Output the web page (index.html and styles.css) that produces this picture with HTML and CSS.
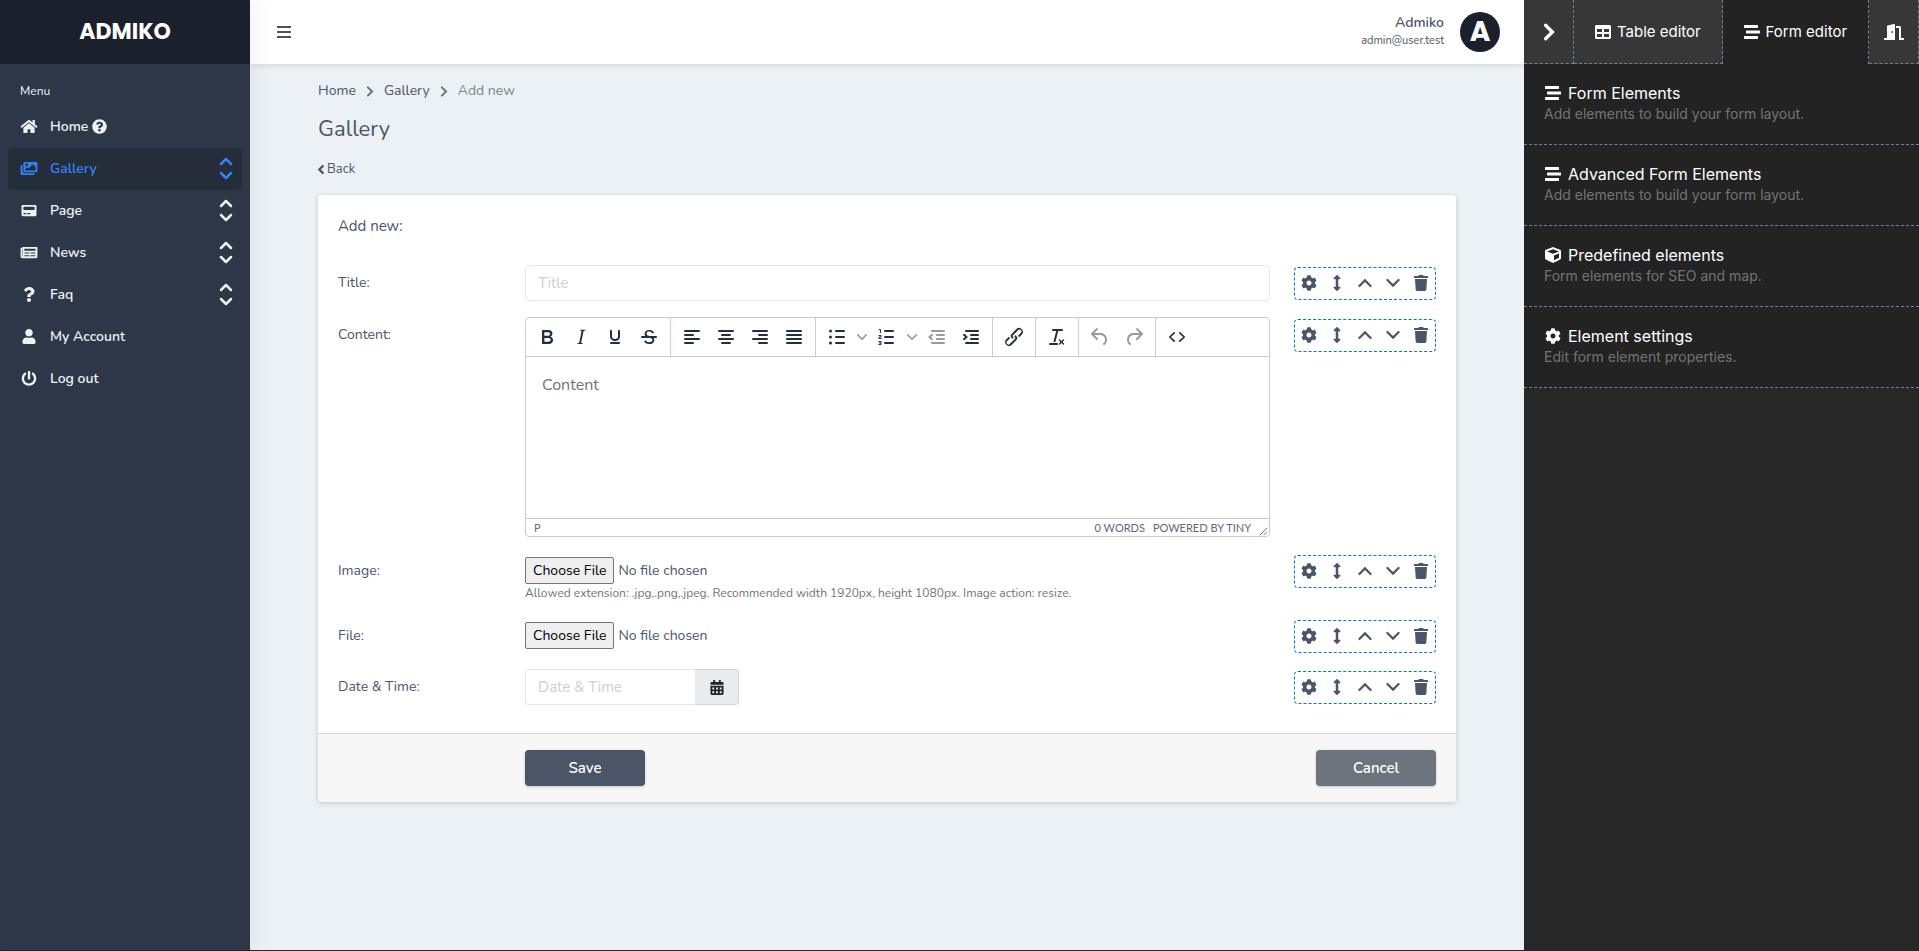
FILE: index.html
```
<!DOCTYPE html>
<html lang="en">
<head>
<meta charset="utf-8">
<title>Admiko - Gallery</title>
<link rel="stylesheet" href="styles.css">
</head>
<body>
<svg class="sprite" aria-hidden="true">
  <symbol id="i-home" viewBox="0 0 576 512"><path d="M280.37 148.26L96 300.11V464a16 16 0 0 0 16 16l112.06-.29a16 16 0 0 0 15.92-16V368a16 16 0 0 1 16-16h64a16 16 0 0 1 16 16v95.64a16 16 0 0 0 16 16.05L464 480a16 16 0 0 0 16-16V300L295.67 148.26a12.19 12.19 0 0 0-15.3 0zM571.6 251.47L488 182.56V44.05a12 12 0 0 0-12-12h-56a12 12 0 0 0-12 12v72.61L318.47 43a48 48 0 0 0-61 0L4.34 251.47a12 12 0 0 0-1.6 16.9l25.5 31A12 12 0 0 0 45.15 301l235.22-193.74a12.19 12.19 0 0 1 15.3 0L530.9 301a12 12 0 0 0 16.9-1.6l25.5-31a12 12 0 0 0-1.7-16.93z"/></symbol>
  <symbol id="i-help" viewBox="0 0 512 512"><path d="M504 256c0 136.997-111.043 248-248 248S8 392.997 8 256C8 119.083 119.043 8 256 8s248 111.083 248 248zM262.655 90c-54.497 0-89.255 22.957-116.549 63.758-3.536 5.286-2.353 12.415 2.715 16.258l34.699 26.31c5.205 3.947 12.621 3.008 16.665-2.122 17.864-22.658 30.113-35.797 57.303-35.797 20.429 0 45.698 13.148 45.698 32.958 0 14.976-12.363 22.667-32.534 33.976C247.128 238.528 216 254.941 216 296v4c0 6.627 5.373 12 12 12h56c6.627 0 12-5.373 12-12v-1.333c0-28.462 83.186-29.647 83.186-106.667 0-58.002-60.165-102-116.531-102zM256 338c-25.365 0-46 20.635-46 46 0 25.364 20.635 46 46 46s46-20.636 46-46c0-25.365-20.635-46-46-46z"/></symbol>
  <symbol id="i-images" viewBox="0 0 576 512"><path d="M480 416v16c0 26.51-21.49 48-48 48H48c-26.51 0-48-21.49-48-48V176c0-26.51 21.49-48 48-48h16v208c0 44.112 35.888 80 80 80h336zm96-80V80c0-26.51-21.49-48-48-48H144c-26.51 0-48 21.49-48 48v256c0 26.51 21.49 48 48 48h384c26.51 0 48-21.49 48-48zM256 128c0 26.51-21.49 48-48 48s-48-21.49-48-48 21.49-48 48-48 48 21.49 48 48zm-96 144l55.515-55.515c4.686-4.686 12.284-4.686 16.971 0L272 256l135.515-135.515c4.686-4.686 12.284-4.686 16.971 0L512 208v112H160v-48z"/></symbol>
  <symbol id="i-page" viewBox="0 0 512 512"><path fill-rule="evenodd" d="M48 64h416a48 48 0 0 1 48 48v288a48 48 0 0 1-48 48H48a48 48 0 0 1-48-48V112a48 48 0 0 1 48-48zM80 128a16 16 0 0 0-16 16v80a16 16 0 0 0 16 16h352a16 16 0 0 0 16-16v-80a16 16 0 0 0-16-16zM76 344a12 12 0 0 0-12 12v16a12 12 0 0 0 12 12h72a12 12 0 0 0 12-12v-16a12 12 0 0 0-12-12zM204 344a12 12 0 0 0-12 12v16a12 12 0 0 0 12 12h84a12 12 0 0 0 12-12v-16a12 12 0 0 0-12-12z"/></symbol>
  <symbol id="i-news" viewBox="0 0 576 512"><path fill-rule="evenodd" d="M552 64H88a24 24 0 0 0-24 24v8H24a24 24 0 0 0-24 24v272a56 56 0 0 0 56 56h472a48 48 0 0 0 48-48V88a24 24 0 0 0-24-24zM56 400a8 8 0 0 1-8-8V144h16v248a8 8 0 0 1-8 8zM140 352h152a12 12 0 0 1 12 12v8a12 12 0 0 1-12 12H140a12 12 0 0 1-12-12v-8a12 12 0 0 1 12-12zM348 352h152a12 12 0 0 1 12 12v8a12 12 0 0 1-12 12H348a12 12 0 0 1-12-12v-8a12 12 0 0 1 12-12zM140 256h152a12 12 0 0 1 12 12v8a12 12 0 0 1-12 12H140a12 12 0 0 1-12-12v-8a12 12 0 0 1 12-12zM348 256h152a12 12 0 0 1 12 12v8a12 12 0 0 1-12 12H348a12 12 0 0 1-12-12v-8a12 12 0 0 1 12-12zM140 128h360a12 12 0 0 1 12 12v40a12 12 0 0 1-12 12H140a12 12 0 0 1-12-12v-40a12 12 0 0 1 12-12z"/></symbol>
  <symbol id="i-question" viewBox="0 0 384 512"><path d="M202.021 0C122.202 0 70.503 32.703 29.914 91.026c-7.363 10.58-5.093 25.086 5.178 32.874l43.138 32.709c10.373 7.865 25.132 6.026 33.253-4.148 25.049-31.381 43.63-49.449 82.757-49.449 30.764 0 68.816 19.799 68.816 49.631 0 22.552-18.617 34.134-48.993 51.164-35.423 19.86-82.299 44.576-82.299 106.405V320c0 13.255 10.745 24 24 24h72.471c13.255 0 24-10.745 24-24v-5.773c0-42.86 125.268-44.645 125.268-160.627C377.504 66.256 286.902 0 202.021 0zM192 373.459c-38.196 0-69.271 31.075-69.271 69.271 0 38.195 31.075 69.27 69.271 69.27s69.271-31.075 69.271-69.271-31.075-69.27-69.271-69.27z"/></symbol>
  <symbol id="i-user" viewBox="0 0 448 512"><path d="M224 256c70.7 0 128-57.3 128-128S294.7 0 224 0 96 57.3 96 128s57.3 128 128 128zm89.6 32h-16.7c-22.2 10.2-46.9 16-72.9 16s-50.6-5.8-72.9-16h-16.7C60.2 288 0 348.2 0 422.4V464c0 26.5 21.5 48 48 48h352c26.5 0 48-21.5 48-48v-41.6c0-74.2-60.2-134.4-134.4-134.4z"/></symbol>
  <symbol id="i-power" viewBox="0 0 512 512"><path d="M400 54.1c63 45 104 118.6 104 201.9 0 136.8-110.8 247.7-247.5 248C120 504.3 8.2 393 8 256.4 7.9 173.1 48.9 99.3 111.8 54.2c11.7-8.3 28-4.8 35 7.7L162.6 90c5.9 10.5 3.1 23.8-6.6 31-41.5 30.8-68 79.6-68 134.9-.1 92.3 74.5 168.1 168 168.1 91.6 0 168.6-74.2 168-169.1-.3-51.8-24.7-101.8-68.1-134-9.7-7.2-12.4-20.5-6.5-30.9l15.8-28.1c7-12.4 23.2-16.1 34.8-7.8zM296 264V24c0-13.3-10.7-24-24-24h-32c-13.3 0-24 10.7-24 24v240c0 13.3 10.7 24 24 24h32c13.3 0 24-10.7 24-24z"/></symbol>
  <symbol id="i-sort" viewBox="0 0 14 24"><path fill="none" stroke="currentColor" stroke-width="2.500" stroke-linecap="round" stroke-linejoin="round" d="M2 7l5-5 5 5M2 16l5 5 5-5"/></symbol>
  <symbol id="i-bars" viewBox="0 0 14 14"><path d="M0 1h14v2H0zM0 6h14v2H0zM0 11h14v2H0z"/></symbol>
  <symbol id="i-right" viewBox="0 0 10 16"><path fill="none" stroke="currentColor" stroke-width="3" stroke-linecap="round" d="M2 2l6 6-6 6"/></symbol>
  <symbol id="i-left" viewBox="0 0 10 16"><path fill="none" stroke="currentColor" stroke-width="4" stroke-linecap="round" d="M8 2L2 8l6 6"/></symbol>
  <symbol id="i-cog" viewBox="0 0 512 512"><path d="M487.4 315.7l-42.6-24.6c4.3-23.2 4.3-47 0-70.2l42.6-24.6c4.9-2.8 7.1-8.6 5.5-14-11.1-35.6-30-67.8-54.7-94.6-3.8-4.1-10-5.1-14.8-2.3L380.8 110c-17.9-15.4-38.5-27.3-60.8-35.1V25.8c0-5.6-3.9-10.5-9.4-11.7-36.7-8.2-74.3-7.8-109.2 0-5.5 1.2-9.4 6.1-9.4 11.7V75c-22.2 7.9-42.8 19.8-60.8 35.1L88.7 85.5c-4.9-2.8-11-1.9-14.8 2.3-24.7 26.7-43.6 58.9-54.7 94.6-1.7 5.4.6 11.2 5.5 14L67.3 221c-4.3 23.2-4.3 47 0 70.2l-42.6 24.6c-4.9 2.8-7.1 8.6-5.5 14 11.1 35.6 30 67.8 54.7 94.6 3.8 4.1 10 5.1 14.8 2.3l42.6-24.6c17.9 15.4 38.5 27.3 60.8 35.1v49.2c0 5.6 3.9 10.5 9.4 11.7 36.7 8.2 74.3 7.8 109.2 0 5.5-1.2 9.4-6.1 9.4-11.7v-49.2c22.2-7.9 42.8-19.8 60.8-35.1l42.6 24.6c4.9 2.8 11 1.9 14.8-2.3 24.7-26.7 43.6-58.9 54.7-94.6 1.5-5.5-.7-11.3-5.6-14.1zM256 336c-44.1 0-80-35.9-80-80s35.9-80 80-80 80 35.9 80 80-35.9 80-80 80z"/></symbol>
  <symbol id="i-move" viewBox="0 0 256 512"><path d="M214.059 377.941H168V134.059h46.059c21.382 0 32.09-25.851 16.971-40.971L144.971 7.029c-9.373-9.373-24.568-9.373-33.941 0L24.971 93.088c-15.119 15.119-4.411 40.971 16.971 40.971H88v243.882H41.941c-21.382 0-32.09 25.851-16.971 40.971l86.059 86.059c9.373 9.373 24.568 9.373 33.941 0l86.059-86.059c15.12-15.119 4.412-40.971-16.97-40.971z"/></symbol>
  <symbol id="i-up" viewBox="0 0 16 16"><path fill="none" stroke="currentColor" stroke-width="2.2" stroke-linecap="round" d="M2.4 11L8 5.4l5.6 5.6"/></symbol>
  <symbol id="i-down" viewBox="0 0 16 16"><path fill="none" stroke="currentColor" stroke-width="2.2" stroke-linecap="round" d="M2.4 5L8 10.600l5.600-5.600"/></symbol>
  <symbol id="i-trash" viewBox="0 0 448 512"><path d="M432 32H312l-9.4-18.7A24 24 0 0 0 281.1 0H166.8a23.72 23.72 0 0 0-21.4 13.3L136 32H16A16 16 0 0 0 0 48v32a16 16 0 0 0 16 16h416a16 16 0 0 0 16-16V48a16 16 0 0 0-16-16zM53.2 467a48 48 0 0 0 47.900 45h245.800a48 48 0 0 0 47.900-45L416 128H32z"/></symbol>
  <symbol id="i-cube" viewBox="0 0 512 512"><path d="M239.1 6.3l-208 78c-18.7 7-31.1 25-31.1 45v225.1c0 18.2 10.3 34.8 26.5 42.9l208 104c13.5 6.8 29.4 6.8 42.9 0l208-104c16.3-8.1 26.5-24.8 26.5-42.9V129.3c0-20-12.4-37.9-31.1-44.9l-208-78C262 2.2 250 2.2 239.1 6.3zM256 68.4l192 72v1.1l-192 78-192-78v-1.1l192-72zm32 356V275.5l160-65v133.9l-160 80z"/></symbol>
  <symbol id="i-door" viewBox="0 0 640 512"><path d="M624 448h-80V113.45C544 86.19 522.47 64 496 64H384v64h96v384h144c8.84 0 16-7.16 16-16v-32c0-8.84-7.16-16-16-16zM312.24 1.01l-192 49.74C105.99 54.44 96 67.7 96 82.92V448H16c-8.84 0-16 7.16-16 16v32c0 8.84 7.16 16 16 16h336V33.18c0-21.58-19.56-37.41-39.76-32.17zM264 288c-13.25 0-24-14.33-24-32s10.75-32 24-32 24 14.33 24 32-10.75 32-24 32z"/></symbol>
  <symbol id="i-stream" viewBox="0 0 512 512"><path d="M16 128h416c8.84 0 16-7.16 16-16V48c0-8.84-7.16-16-16-16H16C7.16 32 0 39.16 0 48v64c0 8.84 7.16 16 16 16zm480 80H80c-8.84 0-16 7.16-16 16v64c0 8.84 7.16 16 16 16h416c8.84 0 16-7.16 16-16v-64c0-8.84-7.16-16-16-16zm-64 176H16c-8.84 0-16 7.16-16 16v64c0 8.84 7.16 16 16 16h416c8.84 0 16-7.16 16-16v-64c0-8.84-7.16-16-16-16z"/></symbol>
  <symbol id="i-table" viewBox="0 0 512 512"><path d="M464 32H48C21.49 32 0 53.49 0 80v352c0 26.51 21.49 48 48 48h416c26.51 0 48-21.49 48-48V80c0-26.51-21.49-48-48-48zM224 416H64v-96h160v96zm0-160H64v-96h160v96zm224 160H288v-96h160v96zm0-160H288v-96h160v96z"/></symbol>
  <symbol id="i-calendar" viewBox="0 0 448 512"><path fill-rule="evenodd" d="M0 192h448v272a48 48 0 0 1-48 48H48a48 48 0 0 1-48-48zM64 256v64h64v-64zM192 256v64h64v-64zM320 256v64h64v-64zM64 384v64h64v-64zM192 384v64h64v-64zM320 384v64h64v-64zM448 112v48H0v-48a48 48 0 0 1 48-48h48V12a12 12 0 0 1 12-12h40a12 12 0 0 1 12 12v52h128V12a12 12 0 0 1 12-12h40a12 12 0 0 1 12 12v52h48a48 48 0 0 1 48 48z"/></symbol>
  <symbol id="t-bold" viewBox="0 0 24 24"><path fill-rule="evenodd" d="M7.8 19c-.3 0-.5 0-.6-.2l-.2-.5V5.7c0-.2 0-.4.2-.5l.6-.2h5c1.500 0 2.700.3 3.500 1 .7.6 1.100 1.400 1.100 2.500a3 3 0 0 1-.6 1.900c-.4.6-1 1-1.600 1.200.4.1.9.3 1.300.6s.8.7 1 1.200c.4.4.5 1 .5 1.600 0 1.300-.4 2.300-1.300 3-.8.7-2.100 1-3.800 1H7.800zm5-8.300c.6 0 1.200-.1 1.600-.5.4-.3.6-.7.6-1.300 0-1.100-.8-1.700-2.300-1.700H9.300v3.500h3.400zm.5 6c.7 0 1.300-.1 1.700-.4.4-.4.6-.9.6-1.500s-.2-1-.7-1.400c-.4-.3-1-.4-2-.4H9.400v3.800h4z"/></symbol>
  <symbol id="t-italic" viewBox="0 0 24 24"><path d="M16.700 4.700l-.1.9h-.3c-.6 0-1 0-1.400.3-.3.3-.4.6-.5 1.100l-2.100 9.800v.6c0 .5.4.8 1.400.8h.2l-.2.8H8l.2-.8h.2c1.100 0 1.800-.5 2-1.500l2-9.800.1-.5c0-.6-.4-.8-1.400-.8h-.3l.2-.9h5.800z"/></symbol>
  <symbol id="t-under" viewBox="0 0 24 24"><path d="M16 5c.6 0 1 .4 1 1v5.500a4 4 0 0 1-.4 1.800l-1 1.400a5.300 5.300 0 0 1-5.500 1 5 5 0 0 1-1.600-1c-.5-.4-.8-.9-1.100-1.400a4 4 0 0 1-.4-1.800V6c0-.6.4-1 1-1s1 .4 1 1v5.500c0 .3 0 .6.2 1l.6.7a3.300 3.300 0 0 0 2.200.8 3.400 3.400 0 0 0 2.200-.8c.3-.2.4-.5.6-.8l.2-.9V6c0-.6.4-1 1-1zM8 17h8c.6 0 1 .4 1 1s-.4 1-1 1H8a1 1 0 0 1 0-2z"/></symbol>
  <symbol id="t-strike" viewBox="0 0 24 24"><path d="M15.600 8.500c-.5-.7-1-1.100-1.300-1.300-.6-.4-1.300-.6-2-.6-2.700 0-2.800 1.700-2.800 2.100 0 1.600 1.800 2 3.200 2.300 4.400.9 4.600 2.800 4.600 3.900 0 1.400-.7 4.100-5 4.100A6.200 6.200 0 0 1 7 16.400l1.500-1.100c.4.6 1.600 2 3.700 2 1.600 0 2.500-.4 3-1.200.4-.8.3-2-.8-2.600-.7-.4-1.600-.7-2.900-1-1-.2-3.900-.8-3.900-3.600C7.600 6 10.300 5 12.400 5c2.900 0 4.200 1.600 4.700 2.400l-1.500 1.100z"/><path d="M5 11h14a1 1 0 0 1 0 2H5a1 1 0 0 1 0-2z"/></symbol>
  <symbol id="t-left" viewBox="0 0 24 24"><path class="ln" d="M5 6h14M5 10h8M5 14h14M5 18h8"/></symbol>
  <symbol id="t-center" viewBox="0 0 24 24"><path class="ln" d="M5 6h14M8 10h8M5 14h14M8 18h8"/></symbol>
  <symbol id="t-right" viewBox="0 0 24 24"><path class="ln" d="M5 6h14M11 10h8M5 14h14M11 18h8"/></symbol>
  <symbol id="t-justify" viewBox="0 0 24 24"><path class="ln" d="M5 6h14M5 10h14M5 14h14M5 18h14"/></symbol>
  <symbol id="t-ul" viewBox="0 0 24 24"><path class="ln" d="M11 6h8M11 12h8M11 18h8"/><circle cx="5.500" cy="6" r="1.500"/><circle cx="5.500" cy="12" r="1.500"/><circle cx="5.500" cy="18" r="1.500"/></symbol>
  <symbol id="t-ol" viewBox="0 0 24 24"><path class="ln" d="M10 6h8M10 12h8M10 18h8"/><path fill="none" stroke="currentColor" d="M4 4.500h1.500V8M3.500 10.500H6V12H4v1.500h2.500M3.500 16.500H6v3H3.500M4 18h2"/></symbol>
  <symbol id="t-chev" viewBox="0 0 10 10"><path d="M8.700 2.200c.3-.3.8-.3 1 0 .4.4.4.9 0 1.200L5.700 7.800c-.3.3-.9.3-1.200 0L.2 3.400a.8.8 0 0 1 0-1.200c.3-.3.8-.3 1.100 0L5 6l3.700-3.800z"/></symbol>
  <symbol id="t-outdent" viewBox="0 0 24 24"><path class="ln" d="M7 6h12M12 10h7M12 14h7M7 18h12M7 9.800L4.400 12 7 14.200"/></symbol>
  <symbol id="t-indent" viewBox="0 0 24 24"><path class="ln" d="M7 6h12M12 10h7M12 14h7M7 18h12M5 9.800L7.600 12 5 14.200"/></symbol>
  <symbol id="t-link" viewBox="0 0 24 24"><path d="M6.200 12.300a1 1 0 0 1 1.400 1.400l-2.100 2a2 2 0 1 0 2.700 2.800l4.800-4.800a1 1 0 0 0 0-1.400 1 1 0 1 1 1.400-1.300 2.900 2.900 0 0 1 0 4L9.600 20a3.900 3.900 0 0 1-5.500-5.500l2-2zm11.600-.6a1 1 0 0 1-1.400-1.400l2-2a2 2 0 1 0-2.600-2.800L11 10.300a1 1 0 0 0 0 1.400A1 1 0 1 1 9.600 13a2.900 2.900 0 0 1 0-4L14.400 4a3.900 3.900 0 0 1 5.500 5.500l-2 2z"/></symbol>
  <symbol id="t-clear" viewBox="0 0 24 24"><path d="M13.200 6a1 1 0 0 1 0 .2l-2.600 10a1 1 0 0 1-1 .8h-.2a.8.8 0 0 1-.8-1l2.600-10H8a1 1 0 1 1 0-2h9a1 1 0 0 1 0 2h-3.800zM5 18h7a1 1 0 0 1 0 2H5a1 1 0 0 1 0-2zm13 1.500L16.500 18 15 19.500a.7.7 0 0 1-1-1l1.500-1.500-1.500-1.500a.7.7 0 0 1 1-1l1.500 1.500 1.500-1.500a.7.7 0 0 1 1 1L17.500 17l1.500 1.500a.7.7 0 0 1-1 1z"/></symbol>
  <symbol id="t-undo" viewBox="0 0 24 24"><path d="M6.400 8H12c3.700 0 6.200 2 6.800 5.100.6 2.700-.4 5.600-2.300 6.800a1 1 0 0 1-1-1.800c1.100-.6 1.800-2.700 1.400-4.600-.5-2.100-2.100-3.500-4.900-3.500H6.400l3.300 3.300a1 1 0 1 1-1.400 1.400l-5-5a1 1 0 0 1 0-1.400l5-5a1 1 0 0 1 1.400 1.400L6.400 8z"/></symbol>
  <symbol id="t-redo" viewBox="0 0 24 24"><path transform="matrix(-1 0 0 1 24 0)" d="M6.400 8H12c3.700 0 6.200 2 6.800 5.100.6 2.700-.4 5.600-2.300 6.800a1 1 0 0 1-1-1.800c1.100-.6 1.800-2.700 1.400-4.600-.5-2.100-2.100-3.500-4.900-3.500H6.400l3.300 3.300a1 1 0 1 1-1.400 1.400l-5-5a1 1 0 0 1 0-1.400l5-5a1 1 0 0 1 1.400 1.400L6.400 8z"/></symbol>
  <symbol id="t-code" viewBox="0 0 24 24"><path fill="none" stroke="currentColor" stroke-width="1.700" stroke-linecap="round" stroke-linejoin="round" d="M9.200 7.800L4.800 12l4.400 4.200M14.800 7.800l4.400 4.200-4.400 4.200"/></symbol>
</svg>

<div class="app">
  <aside class="sidebar">
    <a class="brand" href="#">ADMIKO</a>
    <nav class="menu" aria-label="Main">
      <p class="menu-title">Menu</p>
      <a class="item" href="#"><svg class="mi"><use href="#i-home"/></svg><span>Home</span><svg class="help"><use href="#i-help"/></svg></a>
      <a class="item active" href="#"><svg class="mi"><use href="#i-images"/></svg><span>Gallery</span><svg class="sort"><use href="#i-sort"/></svg></a>
      <a class="item" href="#"><svg class="mi"><use href="#i-page"/></svg><span>Page</span><svg class="sort"><use href="#i-sort"/></svg></a>
      <a class="item" href="#"><svg class="mi"><use href="#i-news"/></svg><span>News</span><svg class="sort"><use href="#i-sort"/></svg></a>
      <a class="item" href="#"><svg class="mi"><use href="#i-question"/></svg><span>Faq</span><svg class="sort"><use href="#i-sort"/></svg></a>
      <a class="item" href="#"><svg class="mi"><use href="#i-user"/></svg><span>My Account</span></a>
      <a class="item" href="#"><svg class="mi"><use href="#i-power"/></svg><span>Log out</span></a>
    </nav>
  </aside>

  <div class="main">
    <header class="topbar">
      <button class="burger" type="button" aria-label="Toggle menu"><svg><use href="#i-bars"/></svg></button>
      <div class="user">
        <div class="user-text"><strong>Admiko</strong><span>admin@user.test</span></div>
        <span class="avatar">A</span>
      </div>
    </header>

    <main class="content">
      <nav class="crumbs" aria-label="Breadcrumb">
        <a href="#">Home</a><svg><use href="#i-right"/></svg><a href="#">Gallery</a><svg><use href="#i-right"/></svg><span>Add new</span>
      </nav>
      <h1>Gallery</h1>
      <a class="back" href="#"><svg><use href="#i-left"/></svg>Back</a>

      <form class="card">
        <div class="card-body">
          <h2>Add new:</h2>
          <div class="row">
            <label for="title">Title:</label>
            <input class="text" id="title" type="text" placeholder="Title">
            <div class="tools">
              <button type="button" aria-label="Settings"><svg><use href="#i-cog"/></svg></button><button type="button" aria-label="Move"><svg><use href="#i-move"/></svg></button><button type="button" aria-label="Up"><svg><use href="#i-up"/></svg></button><button type="button" aria-label="Down"><svg><use href="#i-down"/></svg></button><button type="button" aria-label="Delete"><svg><use href="#i-trash"/></svg></button>
            </div>
          </div>
          <div class="row">
            <label for="body">Content:</label>
            <div class="editor">
              <div class="toolbar">
                <div class="group">
                  <button type="button" aria-label="Bold"><svg><use href="#t-bold"/></svg></button><button type="button" aria-label="Italic"><svg><use href="#t-italic"/></svg></button><button type="button" aria-label="Underline"><svg><use href="#t-under"/></svg></button><button type="button" aria-label="Strikethrough"><svg><use href="#t-strike"/></svg></button>
                </div>
                <div class="group">
                  <button type="button" aria-label="Align left"><svg><use href="#t-left"/></svg></button><button type="button" aria-label="Align center"><svg><use href="#t-center"/></svg></button><button type="button" aria-label="Align right"><svg><use href="#t-right"/></svg></button><button type="button" aria-label="Justify"><svg><use href="#t-justify"/></svg></button>
                </div>
                <div class="group">
                  <button type="button" aria-label="Bullet list"><svg><use href="#t-ul"/></svg></button><button class="chev" type="button" aria-label="Bullet styles"><svg><use href="#t-chev"/></svg></button><button type="button" aria-label="Numbered list"><svg><use href="#t-ol"/></svg></button><button class="chev" type="button" aria-label="Number styles"><svg><use href="#t-chev"/></svg></button><button class="off" type="button" aria-label="Decrease indent"><svg><use href="#t-outdent"/></svg></button><button type="button" aria-label="Increase indent"><svg><use href="#t-indent"/></svg></button>
                </div>
                <div class="group">
                  <button type="button" aria-label="Link"><svg><use href="#t-link"/></svg></button>
                </div>
                <div class="group">
                  <button type="button" aria-label="Clear formatting"><svg><use href="#t-clear"/></svg></button>
                </div>
                <div class="group">
                  <button class="off" type="button" aria-label="Undo"><svg><use href="#t-undo"/></svg></button><button class="off" type="button" aria-label="Redo"><svg><use href="#t-redo"/></svg></button>
                </div>
                <div class="group">
                  <button type="button" aria-label="Source code"><svg><use href="#t-code"/></svg></button>
                </div>
              </div>
              <textarea id="body" placeholder="Content"></textarea>
              <div class="status">
                <span class="path">P</span><span>0 WORDS</span><a href="#">POWERED BY TINY</a>
                <svg class="grip" viewBox="0 0 10 10"><path d="M1 9l8-8M5 9l4-4"/></svg>
              </div>
            </div>
            <div class="tools">
              <button type="button" aria-label="Settings"><svg><use href="#i-cog"/></svg></button><button type="button" aria-label="Move"><svg><use href="#i-move"/></svg></button><button type="button" aria-label="Up"><svg><use href="#i-up"/></svg></button><button type="button" aria-label="Down"><svg><use href="#i-down"/></svg></button><button type="button" aria-label="Delete"><svg><use href="#i-trash"/></svg></button>
            </div>
          </div>
          <div class="row">
            <label for="image">Image:</label>
            <div class="file">
              <input id="image" type="file">
              <small>Allowed extension: .jpg,.png,.jpeg. Recommended width 1920px, height 1080px. Image action: resize.</small>
            </div>
            <div class="tools">
              <button type="button" aria-label="Settings"><svg><use href="#i-cog"/></svg></button><button type="button" aria-label="Move"><svg><use href="#i-move"/></svg></button><button type="button" aria-label="Up"><svg><use href="#i-up"/></svg></button><button type="button" aria-label="Down"><svg><use href="#i-down"/></svg></button><button type="button" aria-label="Delete"><svg><use href="#i-trash"/></svg></button>
            </div>
          </div>
          <div class="row">
            <label for="file">File:</label>
            <div class="file"><input id="file" type="file"></div>
            <div class="tools">
              <button type="button" aria-label="Settings"><svg><use href="#i-cog"/></svg></button><button type="button" aria-label="Move"><svg><use href="#i-move"/></svg></button><button type="button" aria-label="Up"><svg><use href="#i-up"/></svg></button><button type="button" aria-label="Down"><svg><use href="#i-down"/></svg></button><button type="button" aria-label="Delete"><svg><use href="#i-trash"/></svg></button>
            </div>
          </div>
          <div class="row">
            <label for="date">Date &amp; Time:</label>
            <div class="date">
              <input class="text" id="date" type="text" placeholder="Date &amp; Time">
              <button type="button" aria-label="Open calendar"><svg><use href="#i-calendar"/></svg></button>
            </div>
            <div class="tools">
              <button type="button" aria-label="Settings"><svg><use href="#i-cog"/></svg></button><button type="button" aria-label="Move"><svg><use href="#i-move"/></svg></button><button type="button" aria-label="Up"><svg><use href="#i-up"/></svg></button><button type="button" aria-label="Down"><svg><use href="#i-down"/></svg></button><button type="button" aria-label="Delete"><svg><use href="#i-trash"/></svg></button>
            </div>
          </div>
        </div>
        <div class="card-foot">
          <button class="btn save" type="submit">Save</button>
          <button class="btn cancel" type="button">Cancel</button>
        </div>
      </form>
    </main>
  </div>

  <aside class="builder">
    <div class="tabs">
      <button class="tab close" type="button" aria-label="Collapse"><svg><use href="#i-right"/></svg></button>
      <button class="tab" type="button"><svg><use href="#i-table"/></svg>Table editor</button>
      <button class="tab on" type="button"><svg><use href="#i-stream"/></svg>Form editor</button>
      <button class="tab exit" type="button" aria-label="Exit"><svg><use href="#i-door"/></svg></button>
    </div>
    <a class="panel" href="#"><span class="panel-title"><svg><use href="#i-stream"/></svg>Form Elements</span><span class="panel-text">Add elements to build your form layout.</span></a>
    <a class="panel" href="#"><span class="panel-title"><svg><use href="#i-stream"/></svg>Advanced Form Elements</span><span class="panel-text">Add elements to build your form layout.</span></a>
    <a class="panel" href="#"><span class="panel-title"><svg><use href="#i-cube"/></svg>Predefined elements</span><span class="panel-text">Form elements for SEO and map.</span></a>
    <a class="panel" href="#"><span class="panel-title"><svg><use href="#i-cog"/></svg>Element settings</span><span class="panel-text">Edit form element properties.</span></a>
  </aside>
</div>
</body>
</html>
```
FILE: styles.css
```
* { box-sizing: border-box; }
body {
  margin: 0;
  font-family: Nunito, "Noto Sans", sans-serif;
  font-size: 14px;
  line-height: 20px;
  color: #4a5568;
  background: #ecf1f5;
}
a { color: inherit; text-decoration: none; }
button { font: inherit; color: inherit; background: none; border: 0; padding: 0; cursor: pointer; }
svg { fill: currentColor; flex: none; display: block; }
h1, h2, p { margin: 0; font-weight: 400; }
.sprite { position: absolute; width: 0; height: 0; }
.ln { fill: none; stroke: currentColor; stroke-width: 2; stroke-linecap: round; stroke-linejoin: round; }

.app { display: grid; grid-template-columns: 250px 1fr 395px; min-height: 100vh; border-bottom: 1px solid #23282d; }

/* Sidebar */
.sidebar { position: relative; z-index: 1; background: #2d3748; color: #edf2f7; box-shadow: 0 0 28px rgba(0, 0, 0, .08); }
.brand {
  display: flex; align-items: center; justify-content: center; height: 64px;
  background: #1a202c; color: #fff;
  font-family: Poppins, Inter, sans-serif; font-size: 22px; font-weight: 700;
}
.menu { padding: 16px 8px; }
.menu-title { padding: 0 12px; font-size: 12px; line-height: 22px; margin-bottom: 4px; color: #edf2f7; }
.item { display: flex; align-items: center; height: 42px; padding: 0 9px 1px 12px; border-radius: 4px; font-weight: 600; }
.item.active { background: #252d3b; color: #3182f6; }
.mi { width: 18px; height: 15px; margin-right: 12px; }
.help { width: 15px; height: 15px; margin-left: 4px; }
.sort { width: 14px; height: 24px; margin-left: auto; }

/* Header */
.main { display: flex; flex-direction: column; min-width: 0; }
.topbar {
  display: flex; align-items: center; justify-content: space-between; height: 64px;
  padding: 0 24px 0 27px; background: #fff; box-shadow: 0 1px 6px rgba(45, 55, 72, .15);
}
.burger svg { width: 14px; height: 14px; }
.user { display: flex; align-items: center; gap: 16px; }
.user-text { display: flex; flex-direction: column; align-items: flex-end; line-height: 18px; }
.user-text strong { font-weight: 600; }
.user-text span { font-size: 11px; }
.avatar {
  display: flex; align-items: center; justify-content: center; width: 40px; height: 40px;
  border-radius: 50%; background: #1a202c; color: #fff;
  font-family: Poppins, Inter, sans-serif; font-size: 28px; font-weight: 700;
}

/* Content */
.content { padding: 17px 68px; }
.crumbs { display: flex; align-items: center; gap: 10px; }
.crumbs svg { width: 8px; height: 11px; color: #6c757d; }
.crumbs span { color: #7b8490; }
h1 { margin-top: 12px; font-size: 22px; line-height: 32px; }
.back { display: flex; align-items: center; gap: 3px; width: max-content; margin-top: 14px; font-size: 13px; }
.back svg { width: 6px; height: 9px; }
.card { margin-top: 16px; background: #fff; border-radius: 4px; box-shadow: 0 1px 5px rgba(45, 55, 72, .22); overflow: hidden; }
.card-body { padding: 20px 20px 28px; }
h2 { font-size: 15px; line-height: 22px; margin-bottom: 28px; }
.row { display: grid; grid-template-columns: 187px 1fr 166px; align-items: start; }
.row + .row { margin-top: 16px; }
.row > label { line-height: 35px; }
.text {
  width: 100%; min-width: 0; height: 36px; padding: 0 12px; border: 1px solid #e2e8f0; border-radius: 4px;
  font: inherit; font-size: 15px; color: inherit; background: #fff;
}
.text::placeholder { color: #ccd0d4; }
.tools {
  display: grid; grid-template-columns: repeat(5, 1fr); width: 142px; height: 33px; margin: 2px 0 0 24px; padding-bottom: 1px;
  border: 1px dashed #0f70d0; border-radius: 4px;
}
.tools button { display: grid; place-items: center; }
.tools svg { width: 16px; height: 16px; }

/* Rich text editor */
.editor { border: 1px solid #ccc; border-radius: 4px; }
.toolbar { display: flex; border-bottom: 1px solid #ccc; }
.group { display: flex; padding: 2px 4px; border-right: 1px solid #ccc; }
.group:last-child { border-right: 0; }
.group button { display: grid; place-items: center; width: 34px; height: 34px; color: #222f3e; }
.group button.off { color: #959ba3; }
.group button.chev { width: 16px; color: #959ba3; }
.group svg { width: 24px; height: 24px; }
.group .chev svg { width: 10px; height: 10px; }
.editor textarea {
  display: block; width: 100%; height: 161px; padding: 16px; border: 0; resize: none; outline: 0;
  font: inherit; font-size: 16px; line-height: 24px; color: inherit; background: transparent;
}
.editor textarea::placeholder { color: #6b7480; }
.status {
  display: flex; align-items: center; gap: 8px; height: 18px; padding: 0 1px 0 8px; border-top: 1px solid #ccc;
  font-family: Lato, sans-serif; font-size: 11px; line-height: 16px; color: #606b7c;
}
.path { margin-right: auto; }
.grip { width: 9px; height: 9px; align-self: flex-end; fill: none; stroke: currentColor; stroke-width: 1; }

/* File and date fields */
.file { padding-top: 4px; }
.file input { display: block; width: 100%; height: 27px; font: inherit; color: inherit; }
.file input::file-selector-button {
  height: 27px; margin: 0 4px 0 0; padding: 0 7px; border: 1px solid #767676; border-radius: 2px;
  background: #efefef; color: #000; font: inherit;
}
.file small { display: block; font-size: 12px; line-height: 18px; color: #6c757d; }
.date { display: flex; width: 214px; }
.date .text { flex: 1; border-right: 0; border-radius: 4px 0 0 4px; }
.date button {
  display: grid; place-items: center; width: 44px; height: 36px; background: #e9ecef; color: #212529;
  border: 1px solid #ced4da; border-left: 0; border-radius: 0 4px 4px 0;
}
.date svg { width: 14px; height: 15px; }

.card-foot { display: flex; justify-content: space-between; padding: 16px 20px 16px 207px; background: #f7f7f7; border-top: 1px solid #d6d8db; }
.btn { width: 120px; height: 36px; border-radius: 4px; color: #fff; font-size: 15px; font-weight: 600; box-shadow: 0 1px 3px rgba(0, 0, 0, .2); }
.save { background: #4a5568; }
.cancel { background: #6c757d; }

/* Form builder */
.builder { background: #272727; color: #fff; font-family: Inter, sans-serif; }
.tabs { display: flex; height: 64px; background: #232323; }
.tab {
  display: flex; flex: 1 1 auto; align-items: center; justify-content: center; gap: 6px;
  background: #373737; border: 0 dashed #718096; border-width: 0 1px 1px 0; font-size: 15px; white-space: nowrap;
}
.tab svg { width: 16px; height: 16px; }
.tab.close { flex: 0 0 50px; }
.tab.close svg { width: 12px; height: 18px; }
.tab.on { background: #232323; border-bottom: 0; }
.tab.exit { flex: 0 0 50px; }
.tab.exit svg { width: 20px; height: 16px; }
.panel { display: flex; flex-direction: column; height: 81px; padding: 19px 20px; background: #232323; border-bottom: 1px dashed #718096; }
.panel-title { display: flex; align-items: center; gap: 6px; font-size: 16px; }
.panel-title svg { width: 18px; height: 16px; }
.panel-text { margin-top: 1px; font-size: 14px; color: #737373; }
```
